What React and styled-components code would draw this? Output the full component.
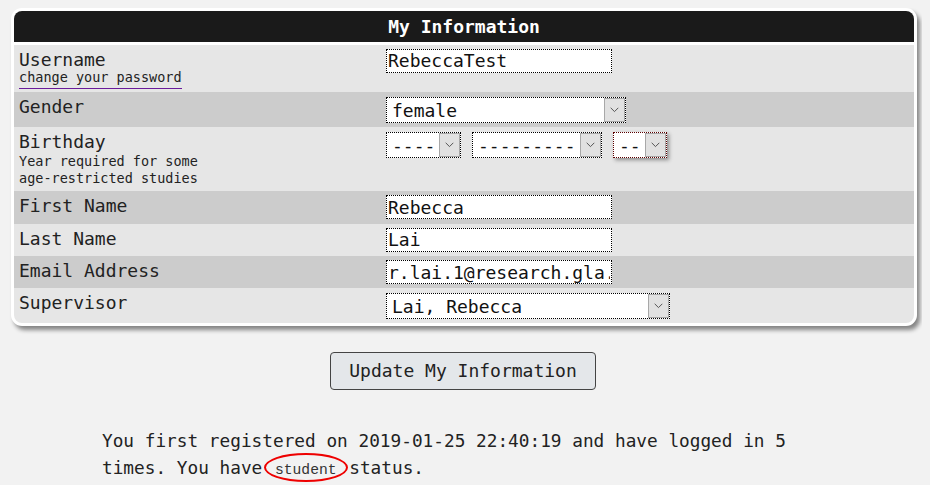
import React from "react";
import styled, { createGlobalStyle, css } from "styled-components";

const GlobalStyle = createGlobalStyle`
  body {
    margin: 8px;
    background: #f2f2f2;
    font-family: "DejaVu Sans Mono", monospace;
    color: #222;
  }
`;

const Panel = styled.section`
  box-sizing: border-box;
  width: 906px;
  margin-left: 3px;
  border: 3px solid #fff;
  border-radius: 11px;
  background: #fff;
  box-shadow: 3px 4px 4px rgba(0, 0, 0, 0.45);
  overflow: hidden;
`;

const Header = styled.h2`
  margin: 0 0 2.7px;
  height: 31px;
  line-height: 31px;
  background: #1a1a1a;
  color: #fff;
  font-size: 18px;
  font-weight: bold;
  text-align: center;
`;

const Row = styled.div`
  display: grid;
  grid-template-columns: 367px 1fr;
  padding: 4px 5px 4.4px;
  background: ${(p) => (p.$dark ? "#cccccc" : "#e6e6e6")};
`;

const LabelCell = styled.div`
  display: flex;
  flex-direction: column;
  align-items: flex-start;
`;

const Label = styled.div`
  font-size: 18px;
  line-height: 21.6px;
`;

const Hint = styled.div`
  font-size: 13.5px;
  line-height: 17px;
`;

const PwLink = styled.a`
  display: inline-block;
  font-size: 13.5px;
  line-height: 15.5px;
  padding-bottom: 2px;
  margin-bottom: -1px;
  border-bottom: 1px solid #6a1b9a;
  color: #222;
  text-decoration: none;
`;

const FieldCell = styled.div`
  display: flex;
  gap: 11px;
  align-items: flex-start;
`;

const TextInput = styled.input`
  box-sizing: border-box;
  width: 226px;
  height: 24px;
  margin: 0;
  padding: 0 1px;
  border: 1px dotted #000;
  background: #fff;
  color: #111;
  font-family: "DejaVu Sans Mono", monospace;
  font-size: 18px;
  outline: none;
`;

const SelectWrap = styled.div`
  box-sizing: border-box;
  display: inline-flex;
  width: ${(p) => p.$w}px;
  height: 25.7px;
  margin-top: 1px;
  border: 1px dotted #000;
  background: #fff;
  ${(p) =>
    p.$focused &&
    css`
      border-color: #5a0000;
      box-shadow: 2px 2px 4px rgba(0, 0, 0, 0.4);
    `}
`;

const NativeSelect = styled.select`
  appearance: none;
  flex: 1;
  min-width: 0;
  margin: 0;
  padding: 0 0 0 5px;
  border: none;
  background: transparent;
  color: #111;
  font-family: "DejaVu Sans Mono", monospace;
  font-size: 18px;
  outline: none;
`;

const ArrowBox = styled.span`
  box-sizing: border-box;
  width: 21px;
  flex: none;
  display: flex;
  align-items: center;
  justify-content: center;
  border: 1px solid #a8a8a8;
  background: #e1e1e1;
`;

const Chevron = () => (
  <svg width="9" height="6" viewBox="0 0 9 6">
    <path d="M0.7 0.8 L4.5 4.6 L8.3 0.8" fill="none" stroke="#555" strokeWidth="1" />
  </svg>
);

const Select = ({ w, value, options, focused }) => (
  <SelectWrap $w={w} $focused={focused}>
    <NativeSelect defaultValue={value}>
      {options.map((o) => (
        <option key={o} value={o}>
          {o}
        </option>
      ))}
    </NativeSelect>
    <ArrowBox>
      <Chevron />
    </ArrowBox>
  </SelectWrap>
);

const Actions = styled.div`
  width: 906px;
  margin: 25.5px 0 0 2px;
  display: flex;
  justify-content: center;
`;

const UpdateButton = styled.button`
  height: 38px;
  padding: 0 18px;
  border: 1px solid #444;
  border-radius: 4px;
  background: #e4e7ea;
  color: #222;
  font-family: "DejaVu Sans Mono", monospace;
  font-size: 18px;
`;

const Summary = styled.p`
  width: 726px;
  margin: 38px auto 0;
  font-size: 17.75px;
  line-height: 27.5px;
  color: #222;
`;

const Status = styled.code`
  position: relative;
  padding: 0 2px;
  font-family: "Liberation Mono", monospace;
  font-size: 14.67px;
  color: #333;
`;

const Circle = styled.span`
  position: absolute;
  left: -9px;
  right: -9px;
  top: -9px;
  bottom: -4px;
  border: 2px solid #e00;
  border-radius: 50%;
  pointer-events: none;
`;

export default function App() {
  return (
    <>
      <GlobalStyle />
      <Panel>
        <Header>My Information</Header>
        <Row>
          <LabelCell>
            <Label>Username</Label>
            <PwLink href="#">change your password</PwLink>
          </LabelCell>
          <FieldCell>
            <TextInput defaultValue="RebeccaTest" />
          </FieldCell>
        </Row>
        <Row $dark>
          <LabelCell>
            <Label>Gender</Label>
          </LabelCell>
          <FieldCell>
            <Select w={240} value="female" options={["female", "male", "other"]} />
          </FieldCell>
        </Row>
        <Row>
          <LabelCell>
            <Label>Birthday</Label>
            <Hint>
              Year required for some
              <br />
              age-restricted studies
            </Hint>
          </LabelCell>
          <FieldCell>
            <Select w={75} value="----" options={["----", "2000"]} />
            <Select w={130} value="---------" options={["---------", "January"]} />
            <Select w={54} value="--" options={["--", "1"]} focused />
          </FieldCell>
        </Row>
        <Row $dark>
          <LabelCell>
            <Label>First Name</Label>
          </LabelCell>
          <FieldCell>
            <TextInput defaultValue="Rebecca" />
          </FieldCell>
        </Row>
        <Row>
          <LabelCell>
            <Label>Last Name</Label>
          </LabelCell>
          <FieldCell>
            <TextInput defaultValue="Lai" />
          </FieldCell>
        </Row>
        <Row $dark>
          <LabelCell>
            <Label>Email Address</Label>
          </LabelCell>
          <FieldCell>
            <TextInput defaultValue="r.lai.1@research.gla.ac.uk" />
          </FieldCell>
        </Row>
        <Row>
          <LabelCell>
            <Label>Supervisor</Label>
          </LabelCell>
          <FieldCell>
            <Select w={284} value="Lai, Rebecca" options={["Lai, Rebecca"]} />
          </FieldCell>
        </Row>
      </Panel>
      <Actions>
        <UpdateButton>Update My Information</UpdateButton>
      </Actions>
      <Summary>
        You first registered on 2019-01-25 22:40:19 and have logged in 5 times. You have{" "}
        <Status>
          student
          <Circle />
        </Status>{" "}
        status.
      </Summary>
    </>
  );
}
